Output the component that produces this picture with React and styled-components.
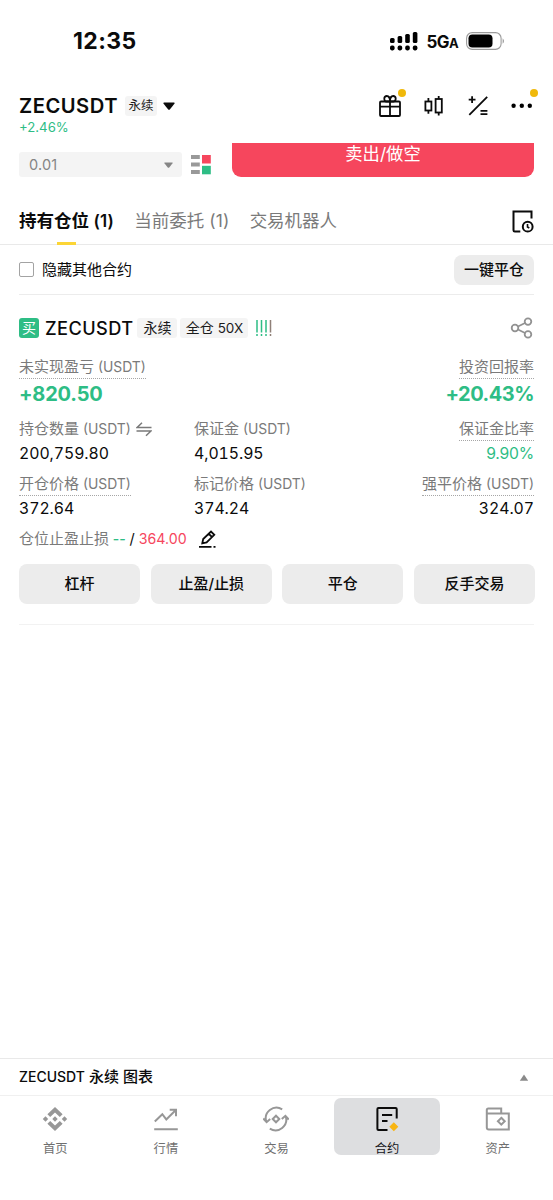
import React from "react";
import styled, { createGlobalStyle } from "styled-components";

const GREEN = "#2ebd85";
const RED = "#f6465d";
const GREY = "#7a7a7a";

const Global = createGlobalStyle`
  * { box-sizing: border-box; }
  body { margin: 0; background: #fff; }
  button { font: inherit; border: 0; padding: 0; margin: 0; color: inherit; }
`;

const Screen = styled.div`
  width: 553px;
  height: 1200px;
  display: flex;
  flex-direction: column;
  overflow: hidden;
  background: #fff;
  color: #0b0b0b;
  font-family: Inter, "Noto Sans CJK SC", sans-serif;
  font-size: 15px;
  line-height: 20px;
  white-space: nowrap;
`;

const Num = styled.span`
  font-size: ${(p) => p.$size || 15}px;
  font-weight: ${(p) => p.$weight || 400};
  letter-spacing: ${(p) => p.$track || 0}px;
  color: ${(p) => p.$color || "inherit"};
  font-variant-numeric: ${(p) => (p.$tabular ? "tabular-nums" : "normal")};
`;

const StatusBar = styled.div`
  height: 82px;
  padding: 0 48px 0 73px;
  display: flex;
  align-items: center;
  justify-content: space-between;
`;
const StatusIcons = styled.div`
  display: flex;
  align-items: center;
`;
const Network = styled.span`
  margin: 0 8px 0 7px;
  padding-top: 2px;
  font: 700 17px/20px Inter, sans-serif;
  letter-spacing: -0.6px;
  small { font-size: 13px; }
`;

const Header = styled.header`
  height: 61px;
  padding: 13px 10px 0 19px;
  display: flex;
  justify-content: space-between;
`;
const PairRow = styled.div`
  height: 22px;
  display: flex;
  align-items: center;
`;
const Tag = styled.span`
  height: ${(p) => p.$h || 20}px;
  width: ${(p) => p.$w}px;
  display: inline-flex;
  align-items: center;
  justify-content: center;
  border-radius: 3px;
  background: #f4f4f4;
  font-size: ${(p) => p.$size || 14}px;
  color: #1c1c1c;
`;
const PairTag = styled(Tag)`margin: 0 6px 0 7px;`;
const Change = styled.div`
  height: 20px;
  line-height: 20px;
`;
const HeaderIcons = styled.div`
  display: flex;
  height: 24px;
  margin: -1px -1px 0 0;
`;
const IconSlot = styled.div`
  position: relative;
  width: 44px;
  display: flex;
  justify-content: center;
`;
const Dot = styled.span`
  position: absolute;
  top: -5px;
  right: ${(p) => p.$right}px;
  width: 8px;
  height: 8px;
  border-radius: 50%;
  background: #f0b90b;
`;

const OrderRow = styled.div`
  height: 54px;
  padding: 0 19px;
  display: flex;
`;
const Select = styled.div`
  width: 163px;
  height: 25px;
  margin-top: 9px;
  padding: 0 9px 0 10px;
  display: flex;
  align-items: center;
  justify-content: space-between;
  border-radius: 3px;
  background: #f4f4f4;
  color: #858585;
`;
const BookIcon = styled.svg`margin: 12px 21px 0 9px;`;
const SellButton = styled.button`
  flex: 1;
  height: 34px;
  padding-bottom: 12px;
  border-radius: 0 0 9px 9px;
  background: ${RED};
  color: #fff;
  font-size: 17.3px;
  line-height: 22px;
`;

const Tabs = styled.nav`
  height: 48px;
  padding: 0 20px 0 19px;
  display: flex;
  align-items: stretch;
  border-bottom: 1px solid #e9e9e9;
`;
const Tab = styled.div`
  margin-right: 20px;
  display: flex;
  flex-direction: column;
  align-items: center;
  justify-content: space-between;
  font-size: 17.5px;
  line-height: 47px;
  height: 47px;
  font-weight: ${(p) => (p.$active ? 600 : 400)};
  color: ${(p) => (p.$active ? "#0b0b0b" : GREY)};
  &::after {
    content: "";
    width: 19px;
    height: 3px;
    margin-top: -3px;
    flex: none;
    background: ${(p) => (p.$active ? "#fcd535" : "transparent")};
  }
`;
const HistoryIcon = styled.svg`margin: 12px -1px 0 auto;`;

const FilterRow = styled.div`
  height: 50px;
  margin: 0 19px;
  display: flex;
  align-items: center;
  border-bottom: 1px solid #ececec;
`;
const Checkbox = styled.span`
  width: 15px;
  height: 15px;
  margin-right: 8px;
  border: 1px solid #a3a3a3;
  border-radius: 2px;
`;
const CloseAll = styled.button`
  width: 80px;
  height: 30px;
  margin-left: auto;
  border-radius: 8px;
  background: #ececec;
  font-weight: 500;
`;

const Position = styled.section`
  height: 330px;
  margin: 0 19px;
  padding-top: 23px;
  display: flex;
  flex-direction: column;
  border-bottom: 1px solid #f2f2f2;
`;
const PositionHead = styled.div`
  height: 20px;
  margin-bottom: 11px;
  display: flex;
  align-items: center;
`;
const Side = styled.span`
  width: 20px;
  height: 20px;
  margin-right: 6px;
  border-radius: 3px;
  background: ${GREEN};
  color: #fff;
  font-size: 14px;
  text-align: center;
`;
const HeadTag = styled(Tag)`margin-left: ${(p) => p.$gap}px;`;
const BarsIcon = styled.svg`margin-left: 8px;`;
const ShareIcon = styled.svg`margin-left: auto;`;

const Stats = styled.div`
  height: ${(p) => p.$h}px;
  display: grid;
  grid-template-columns: 175px 1fr auto;
`;
const Stat = styled.div`
  padding-top: 7px;
  display: flex;
  flex-direction: column;
  align-items: ${(p) => (p.$right ? "flex-end" : "flex-start")};
`;
const Label = styled.div`
  height: 23px;
  line-height: 22px;
  display: flex;
  align-items: center;
  color: ${GREY};
  border-bottom: ${(p) => (p.$dotted ? "1px dotted #a6a6a6" : "1px solid transparent")};
  svg { margin-left: 5px; }
`;
const Value = styled.div`
  height: ${(p) => p.$h || 25}px;
  line-height: ${(p) => p.$h || 25}px;
`;
const TpSl = styled.div`
  height: 22px;
  margin-top: 6px;
  display: flex;
  align-items: center;
  color: ${GREY};
`;
const EditIcon = styled.svg`margin-left: 12px;`;
const Actions = styled.div`
  margin-top: 14px;
  margin-right: -1px;
  display: grid;
  grid-template-columns: repeat(4, 1fr);
  gap: 10.5px;
`;
const Action = styled.button`
  height: 40px;
  border-radius: 8px;
  background: #ececec;
  font-weight: 500;
`;

const ChartBar = styled.div`
  height: 38px;
  margin-top: auto;
  padding: 0 24px 0 19px;
  display: flex;
  align-items: center;
  justify-content: space-between;
  border-top: 1px solid #e9e9e9;
  border-bottom: 1px solid #f0f0f0;
  font-weight: 500;
`;
const BottomNav = styled.nav`
  height: 104px;
  padding-top: 2px;
  display: grid;
  grid-template-columns: repeat(5, 1fr);
`;
const NavItem = styled.div`
  height: 57px;
  margin: 0 2.5px;
  padding-top: 8px;
  display: flex;
  flex-direction: column;
  align-items: center;
  border-radius: 7px;
  background: ${(p) => (p.$active ? "#dddee0" : "transparent")};
  color: ${(p) => (p.$active ? "#14151a" : "#6f6f6f")};
  font-size: 12.3px;
  line-height: 18px;
  svg { flex: none; margin-bottom: 8px; }
`;

const Caret = ({ w, h, color, up }) => (
  <svg width={w} height={h} viewBox="0 0 12 8">
    <path
      d={up ? "M1 8 6 .5 11 8Z" : "M1 .5h10q1 .4.4 1.2L7 7.2q-1 1-2 0L.6 1.7Q0 .9 1 .5Z"}
      fill={color}
    />
  </svg>
);

const Signal = () => (
  <svg width="30" height="20" viewBox="0 0 30 20">
    {[0, 1, 2, 3].map((i) => (
      <g key={i}>
        <rect x={1 + i * 7.6} y={[7, 5, 3, 1][i]} width="4.6" height={[5, 7, 9, 11][i]} rx="1.5" />
        <rect x={1 + i * 7.6} y="14.6" width="4.6" height="4.8" rx="1.8" />
      </g>
    ))}
  </svg>
);

const Battery = () => (
  <svg width="39" height="18" viewBox="0 0 39 18">
    <rect x=".6" y=".6" width="34.5" height="16.8" rx="5.6" fill="none" stroke="#9b9b9b" strokeWidth="1.1" />
    <rect x="2.5" y="2.5" width="24" height="13" rx="3.8" />
    <path d="M36.7 6.2q2.4 2.8 0 5.6Z" fill="#8d8d8d" />
  </svg>
);

const Gift = () => (
  <svg width="24" height="24" viewBox="0 0 24 24" fill="none" stroke="#0b0b0b" strokeWidth="1.8">
    <rect x="2" y="7.5" width="20" height="14.500" rx="1" />
    <path d="M2 12.6h20M12 7v15" />
    <path d="M12 7.5H8.4C6.9 7.500 6.300 6.200 6.300 4.600 6.300 3 7.300 2 8.800 2 11 2 12 3.500 12 7.500ZM12 7.500h3.600c1.500 0 2.100-1.300 2.100-2.900 0-1.600-1-2.600-2.500-2.600C13 2 12 3.500 12 7.500Z" />
  </svg>
);

const Candles = () => (
  <svg width="24" height="24" viewBox="0 0 24 24" fill="none" stroke="#0b0b0b" strokeWidth="1.8">
    <rect x="3.4" y="7.5" width="6" height="9" />
    <rect x="13.6" y="5" width="6.2" height="13.5" />
    <path d="M6.4 4v3.500M6.400 16.500v3.200M16.700 2v3M16.700 18.500v2.900" />
  </svg>
);

const PlusMinus = () => (
  <svg width="24" height="24" viewBox="0 0 24 24" fill="none" stroke="#0b0b0b" strokeWidth="1.8">
    <path d="M3.3 20.8 21.2 2.900M2.700 5.700h6.800M6.100 2.300v6.800M14.500 16.800h6.900M14.500 20.200h6.900" />
  </svg>
);

const More = () => (
  <svg width="24" height="24" viewBox="0 0 24 24">
    <circle cx="3.6" cy="11.7" r="2.2" />
    <circle cx="11.8" cy="11.7" r="2.2" />
    <circle cx="19.8" cy="11.7" r="2.2" />
  </svg>
);

const Swap = () => (
  <svg width="16" height="15" viewBox="0 0 16 15" fill="none" stroke={GREY} strokeWidth="1.5">
    <path d="M6 .8.9 5.6H15.5M.5 9H15L10 13.8" />
  </svg>
);

const NavIcon = ({ children, color = "#979797" }) => (
  <svg width="26" height="26" viewBox="0 0 26 26" fill="none" stroke={color} strokeWidth="2">
    {children}
  </svg>
);

const NAV = [
  {
    label: "首页",
    icon: (
      <NavIcon>
        <g fill="#979797" stroke="none">
          <path d="M13 .9 20.6 8.3 17.8 11.1 13 6.4 8.2 11.1 5.4 8.3Z" />
          <path d="M13 25.1 5.4 17.7 8.2 14.9 13 19.6 17.8 14.9 20.6 17.7Z" />
          <path d="m13 10.3 2.7 2.7-2.7 2.7-2.7-2.7Z" />
          <path d="m3.5 10.3 2.7 2.7-2.7 2.7L.8 13Z" />
          <path d="m22.5 10.3 2.7 2.7-2.7 2.7-2.7-2.7Z" />
        </g>
      </NavIcon>
    ),
  },
  {
    label: "行情",
    icon: (
      <NavIcon>
        <path d="M1.8 15.5 9.3 8.2l4 5.2L22.6 4.2M16.7 3.7H23v6.5M1.2 23.3H24.8" />
      </NavIcon>
    ),
  },
  {
    label: "交易",
    icon: (
      <NavIcon>
        <path d="M19.2 3.4A10.700 10.700 0 0 0 3.400 16M.2 12.500 3.600 16.200 7.200 13" />
        <path d="M6.800 22.600A10.700 10.700 0 0 0 22.600 10M18.800 13 22.400 9.800 25.800 13.500" />
        <path d="m13 9.700 3.300 3.300-3.300 3.300L9.700 13Z" />
      </NavIcon>
    ),
  },
  {
    label: "合约",
    active: true,
    icon: (
      <NavIcon color="#0b0b0b">
        <path d="M13.5 24H4.5Q3.4 24 3.4 23V3Q3.4 2 4.5 2H21.6Q22.7 2 22.7 3V12.5M8 8.9H18.2M8 14.9H13.5" />
        <path d="m19.8 16.2 4.5 4.5-4.5 4.500-4.500-4.500Z" fill="#f8b512" stroke="none" />
      </NavIcon>
    ),
  },
  {
    label: "资产",
    icon: (
      <NavIcon>
        <path d="M1.8 7.5H23.8V23.5H3.8Q1.8 23.5 1.8 21.5V4Q1.8 2.5 3.3 2.5H16.2V7.5" />
        <path d="m16.3 11.8 3.4 3.4-3.4 3.4-3.4-3.4Z" />
      </NavIcon>
    ),
  },
];

const Usdt = () => <Num $size={13.9}>&nbsp;(USDT)</Num>;
const Figure = ({ children, color }) => (
  <Num $size={15.8} $tabular $track={-0.05} $color={color}>{children}</Num>
);

export default function App() {
  return (
    <Screen>
      <Global />
      <StatusBar>
        <Num $size={23} $weight={700} $track={0.4}>12:35</Num>
        <StatusIcons>
          <Signal />
          <Network>5G<small>A</small></Network>
          <Battery />
        </StatusIcons>
      </StatusBar>

      <Header>
        <div>
          <PairRow>
            <Num $size={20.2} $weight={600} $track={0.5}>ZECUSDT</Num>
            <PairTag $w={32} $h={20} $size={12.5}>永续</PairTag>
            <Caret w={12} h={8} color="#0b0b0b" />
          </PairRow>
          <Change><Num $size={13.2} $color={GREEN}>+2.46%</Num></Change>
        </div>
        <HeaderIcons>
          <IconSlot><Gift /><Dot $right={6} /></IconSlot>
          <IconSlot><Candles /></IconSlot>
          <IconSlot><PlusMinus /></IconSlot>
          <IconSlot><More /><Dot $right={6} /></IconSlot>
        </HeaderIcons>
      </Header>

      <OrderRow>
        <Select>
          <Num $size={14.5} $track={0.2}>0.01</Num>
          <Caret w={9} h={6} color="#858585" />
        </Select>
        <BookIcon width="20" height="20" viewBox="0 0 20 20">
          <path d="M0 0h8.8v4H0ZM0 7.5h8.8v4H0ZM0 15h8.8v4H0Z" fill="#999" />
          <path d="M11 0h8.8v8.5H11Z" fill={RED} />
          <path d="M11 10.8h8.8v8.5H11Z" fill={GREEN} />
        </BookIcon>
        <SellButton>卖出/做空</SellButton>
      </OrderRow>

      <Tabs>
        <Tab $active><span>持有仓位<Num $size={17} $weight={600} $track={0.2}> (1)</Num></span></Tab>
        <Tab><span>当前委托<Num $size={17.4} $track={0.2}> (1)</Num></span></Tab>
        <Tab>交易机器人</Tab>
        <HistoryIcon width="22" height="24" viewBox="0 0 22 24" fill="none" stroke="#0b0b0b" strokeWidth="2">
          <path d="M8.3 22.5H2.8Q1.5 22.500 1.500 21.200V2.500H19.500V9.500" />
          <circle cx="15.7" cy="17.7" r="4.9" />
          <path d="M15.5 15v3l1.8 1" strokeWidth="1.6" />
        </HistoryIcon>
      </Tabs>

      <FilterRow>
        <Checkbox />
        隐藏其他合约
        <CloseAll>一键平仓</CloseAll>
      </FilterRow>

      <Position>
        <PositionHead>
          <Side>买</Side>
          <Num $size={18.2} $weight={500} $track={0.4}>ZECUSDT</Num>
          <HeadTag $gap={4} $w={40}>永续</HeadTag>
          <HeadTag $gap={3} $w={68}>全仓&nbsp;<Num $size={13.5}>50X</Num></HeadTag>
          <BarsIcon width="16" height="16" viewBox="0 0 16 16" fill="none" strokeWidth="1.5">
            <path d="M1 0v12.5M1 14v2M5.5 0v12.5M5.5 14v2M10 0v12.5M10 14v2" stroke={GREEN} />
            <path d="M14.5 0v12.5M14.5 14v2" stroke="#8f8078" />
          </BarsIcon>
          <ShareIcon width="24" height="22" viewBox="0 0 24 22" fill="none" stroke="#929292" strokeWidth="1.8">
            <circle cx="5" cy="11" r="3.3" />
            <circle cx="18" cy="4.6" r="3.3" />
            <circle cx="18" cy="17.4" r="3.3" />
            <path d="m8 9.5 7-3.5M8 12.5l7 3.5" />
          </ShareIcon>
        </PositionHead>

        <Stats $h={62}>
          <Stat>
            <Label $dotted>未实现盈亏<Usdt /></Label>
            <Value $h={31}><Num $size={20} $weight={700} $track={-0.2} $color={GREEN}>+820.50</Num></Value>
          </Stat>
          <span />
          <Stat $right>
            <Label $dotted>投资回报率</Label>
            <Value $h={31}><Num $size={20} $weight={700} $track={-0.5} $color={GREEN}>+20.43%</Num></Value>
          </Stat>
        </Stats>

        <Stats $h={55}>
          <Stat><Label>持仓数量<Usdt /><Swap /></Label><Value><Figure>200,759.80</Figure></Value></Stat>
          <Stat><Label>保证金<Usdt /></Label><Value><Figure>4,015.95</Figure></Value></Stat>
          <Stat $right>
            <Label $dotted>保证金比率</Label>
            <Value><Num $size={15.7} $track={-0.2} $color={GREEN}>9.90%</Num></Value>
          </Stat>
        </Stats>

        <Stats $h={56}>
          <Stat><Label $dotted>开仓价格<Usdt /></Label><Value><Figure>372.64</Figure></Value></Stat>
          <Stat><Label>标记价格<Usdt /></Label><Value><Figure>374.24</Figure></Value></Stat>
          <Stat $right><Label $dotted>强平价格<Usdt /></Label><Value><Figure>324.07</Figure></Value></Stat>
        </Stats>

        <TpSl>
          仓位止盈止损
          <Num $color={GREEN} $size={14} $weight={500}>&nbsp;--&nbsp;</Num>
          <Num $color="#0b0b0b" $size={14.5}>/&nbsp;</Num>
          <Num $color={RED} $size={14.2}>364.00</Num>
          <EditIcon width="18" height="18" viewBox="0 0 18 18" fill="none" stroke="#0b0b0b" strokeWidth="1.8">
            <path d="M3.3 13.3 4.2 9 12 1.5l3.3 3.3L7.6 12.5ZM9.8 3.8l3.2 3.2M0 16.8h12.5M14.5 16.8h2" />
          </EditIcon>
        </TpSl>

        <Actions>
          <Action>杠杆</Action>
          <Action>止盈/止损</Action>
          <Action>平仓</Action>
          <Action>反手交易</Action>
        </Actions>
      </Position>

      <ChartBar>
        <span><Num $size={14} $weight={500}>ZECUSDT</Num> 永续 图表</span>
        <Caret w={10} h={7} color="#8a8a8a" up />
      </ChartBar>
      <BottomNav>
        {NAV.map((n) => (
          <NavItem key={n.label} $active={n.active}>
            {n.icon}
            {n.label}
          </NavItem>
        ))}
      </BottomNav>
    </Screen>
  );
}
